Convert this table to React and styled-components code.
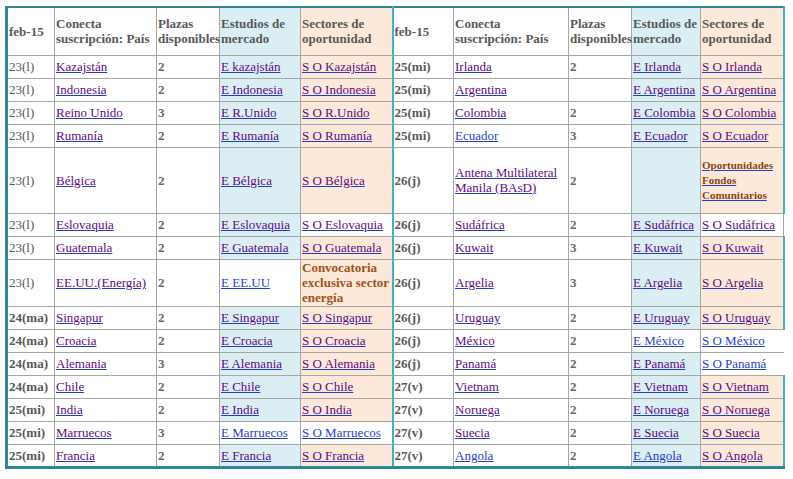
import styled, {createGlobalStyle} from 'styled-components';

// colours taken off the reference
const grid = '#a6a6a6';
const darkTeal = '#31849b';
const lightTeal = '#4bacc6';
const blueBg = '#daeef3';
const peachBg = '#fde9d9';
const purple = '#5f0a87';
const linkBlue = '#1f3fcf';
const grey = '#595959';

const widths = [48, 102, 63, 81, 92, 61, 115, 63, 69, 83];

const head = [
    'feb-15', 'Conecta suscripción: País', 'Plazas disponibles', 'Estudios de mercado', 'Sectores de oportunidad',
    'feb-15', 'Conecta suscripción: País', 'Plazas disponibles', 'Estudios de mercado', 'Sectores de oportunidad',
];

// each row: the ten cells, plus what differs from the usual look
const rows = [
    {cells: ['23(l)', 'Kazajstán', '2', 'E kazajstán', 'S O Kazajstán', '25(mi)', 'Irlanda', '2', 'E Irlanda', 'S O Irlanda']},
    {cells: ['23(l)', 'Indonesia', '2', 'E Indonesia', 'S O Indonesia', '25(mi)', 'Argentina', '', 'E Argentina', 'S O Argentina']},
    {cells: ['23(l)', 'Reino Unido', '3', 'E R.Unido', 'S O R.Unido', '25(mi)', 'Colombia', '2', 'E Colombia', 'S O Colombia']},
    {cells: ['23(l)', 'Rumanía', '2', 'E Rumanía', 'S O Rumanía', '25(mi)', 'Ecuador', '3', 'E Ecuador', 'S O Ecuador'], blue: [6]},
    {cells: ['23(l)', 'Bélgica', '2', 'E Bélgica', 'S O Bélgica', '26(j)', 'Antena Multilateral Manila (BAsD)', '2', '', 'FONDOS'], h: 66},
    {cells: ['23(l)', 'Eslovaquia', '2', 'E Eslovaquia', 'S O Eslovaquia', '26(j)', 'Sudáfrica', '2', 'E Sudáfrica', 'S O Sudáfrica'], white: [4, 9], edge: 'grey'},
    {cells: ['23(l)', 'Guatemala', '2', 'E Guatemala', 'S O Guatemala', '26(j)', 'Kuwait', '3', 'E Kuwait', 'S O Kuwait']},
    {cells: ['23(l)', 'EE.UU.(Energía)', '2', 'E EE.UU', 'CONVOCATORIA', '26(j)', 'Argelia', '3', 'E Argelia', 'S O Argelia'], white: [3], blue: [3], h: 47},
    {cells: ['24(ma)', 'Singapur', '2', 'E Singapur', 'S O Singapur', '26(j)', 'Uruguay', '2', 'E Uruguay', 'S O Uruguay']},
    {cells: ['24(ma)', 'Croacia', '2', 'E Croacia', 'S O Croacia', '26(j)', 'México', '2', 'E México', 'S O México'], white: [8, 9], blue: [8, 9], edge: 'none'},
    {cells: ['24(ma)', 'Alemania', '3', 'E Alemania', 'S O Alemania', '26(j)', 'Panamá', '2', 'E Panamá', 'S O Panamá'], white: [9], blue: [9], edge: 'none'},
    {cells: ['24(ma)', 'Chile', '2', 'E Chile', 'S O Chile', '27(v)', 'Vietnam', '2', 'E Vietnam', 'S O Vietnam']},
    {cells: ['25(mi)', 'India', '2', 'E India', 'S O India', '27(v)', 'Noruega', '2', 'E Noruega', 'S O Noruega']},
    {cells: ['25(mi)', 'Marruecos', '3', 'E Marruecos', 'S O Marruecos', '27(v)', 'Suecia', '2', 'E Suecia', 'S O Suecia'], white: [3, 4], blue: [3, 4]},
    {cells: ['25(mi)', 'Francia', '2', 'E Francia', 'S O Francia', '27(v)', 'Angola', '2', 'E Angola', 'S O Angola'], blue: [6, 8]},
];

const bgFor = (col) => {
    if (col === 3 || col === 8) return blueBg;
    if (col === 4 || col === 9) return peachBg;
    return 'transparent';
};

const App = () => {
    const renderCell = (text, col, row) => {
        if (text === 'CONVOCATORIA') {
            return <Notice>Convocatoria exclusiva sector energía</Notice>;
        }
        if (text === 'FONDOS') {
            return (
                <SmallLink href="#">Oportunidades<br/>Fondos<br/>Comunitarios</SmallLink>
            );
        }
        if (col === 0 || col === 5) {
            return <Day $bold={text !== '23(l)'}>{text}</Day>;
        }
        if (col === 2 || col === 7) return <Plaza>{text}</Plaza>;
        if (!text) return null;
        const isBlue = (row.blue || []).includes(col);
        return <Link href="#" $blue={isBlue}>{text}</Link>;
    };

    return (
        <>
            <Global/>
            <Wrap>
                <Table>
                    <colgroup>
                        {widths.map((w, i) => <col key={i} style={{width: w}}/>)}
                    </colgroup>
                    <tbody>
                    <Row $h={48}>
                        {head.map((t, i) => (
                            <HeadCell key={i} $col={i} $bg={bgFor(i)}>{t}</HeadCell>
                        ))}
                    </Row>
                    {rows.map((row, r) => (
                        <Row key={r} $h={row.h || 23}>
                            {row.cells.map((text, i) => (
                                <Cell
                                    key={i}
                                    $col={i}
                                    $bg={(row.white || []).includes(i) ? '#fff' : bgFor(i)}
                                    $edge={i === 9 ? (row.edge || 'teal') : null}
                                    $last={r === rows.length - 1}
                                >
                                    {renderCell(text, i, row)}
                                </Cell>
                            ))}
                        </Row>
                    ))}
                    </tbody>
                </Table>
            </Wrap>
        </>
    );
};

export default App;


const Global = createGlobalStyle`
  body {
    margin: 0;
    background: #fff;
    font-family: "Liberation Serif", "Times New Roman", serif;
  }
`;

const Wrap = styled.div`
  padding: 6px 0 0 5px;
`;

const Table = styled.table`
  border-collapse: collapse;
  table-layout: fixed;
  width: 777px;
  font-size: 13px;
  line-height: 15px;
`;

const Row = styled.tr`
  height: ${props => props.$h}px;
`;

const edgeBorder = (edge) => {
    if (edge === 'teal') return `2px solid ${lightTeal}`;
    if (edge === 'grey') return `1px solid ${grid}`;
    if (edge === 'none') return 'hidden';
    return `1px solid ${grid}`;
};

const baseCell = (props) => `
  border: 1px solid ${grid};
  background: ${props.$bg};
  padding: 0 0 0 1px;
  vertical-align: middle;
  text-align: left;
  ${props.$col === 0 ? `border-left: 3px solid ${darkTeal};` : ''}
  ${props.$col === 4 ? `border-right: 2px solid ${lightTeal};` : ''}
`;

const HeadCell = styled.td`
  ${props => baseCell(props)}
  border-top: 2px solid ${darkTeal};
  ${props => props.$col === 9 ? `border-right: 2px solid ${lightTeal};` : ''}
  color: ${grey};
  font-weight: bold;
`;

const Cell = styled.td`
  ${props => baseCell(props)}
  ${props => props.$edge ? `border-right: ${edgeBorder(props.$edge)};` : ''}
  ${props => props.$last ? `border-bottom: 3px solid ${darkTeal};` : ''}
`;

const Day = styled.span`
  color: ${grey};
  font-weight: ${props => props.$bold ? 'bold' : 'normal'};
`;

const Plaza = styled.span`
  color: #6a6a6a;
  font-weight: bold;
`;

const Link = styled.a`
  color: ${props => props.$blue ? linkBlue : purple};
  text-decoration: underline;
  text-decoration-color: ${linkBlue};
`;

const SmallLink = styled.a`
  display: block;
  color: #8a4513;
  font-size: 11px;
  line-height: 15px;
  font-weight: bold;
  text-decoration: underline;
  text-decoration-color: ${linkBlue};
`;

const Notice = styled.span`
  color: #a0521d;
  font-weight: bold;
`;
